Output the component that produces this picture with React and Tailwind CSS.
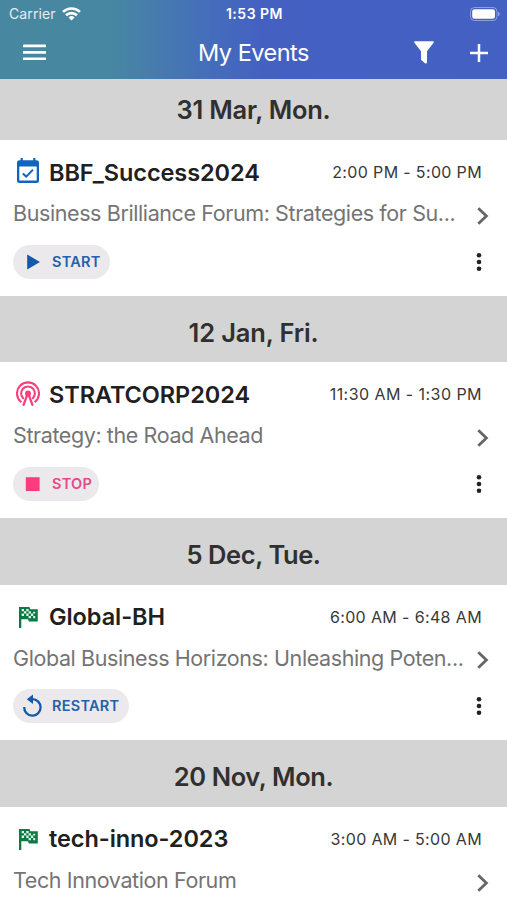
const ICON_BLUE = '#1259a8';

function WifiIcon() {
  return (
    <svg width="19" height="14" viewBox="0 0 19 14" fill="none" stroke="white" strokeWidth="2.6">
      <path d="M1 4.9 A12.2 12.2 0 0 1 18 4.9" />
      <path d="M4 8.3 A8 8 0 0 1 15 8.3" />
      <path d="M6.5 10.4 A4.4 4.4 0 0 1 12.5 10.4 L9.5 13.5 Z" fill="white" stroke="none" />
    </svg>
  );
}

function BatteryIcon() {
  return (
    <svg width="30" height="14" viewBox="0 0 30 14">
      <rect x="0.5" y="0.5" width="26.5" height="13" rx="4" fill="none" stroke="white" strokeOpacity="0.4" />
      <rect x="2.2" y="2.2" width="22.8" height="9.6" rx="2.4" fill="white" />
      <path d="M28.2 4.8 Q29.7 5.8 29.7 7 Q29.7 8.2 28.2 9.2 Z" fill="white" fillOpacity="0.5" />
    </svg>
  );
}

function CalendarIcon() {
  return (
    <svg className="mb-[3px]" width="24" height="26" viewBox="0 0 24 26" fill="none">
      <path d="M4.6 0 H6.8 V2.2 H17.2 V0 H19.4 V2.2 H20.5 Q23 2.2 23 4.7 V22.4 Q23 24.9 20.5 24.9 H3.5 Q1 24.9 1 22.4 V4.7 Q1 2.2 3.5 2.2 H4.6 Z M3.3 8.6 V22.4 H20.7 V8.6 Z" fill="#1165bd" fillRule="evenodd" />
      <path d="M6.8 15.4 L10.2 18.6 L17 11.6" stroke="#1165bd" strokeWidth="2" />
    </svg>
  );
}

function BroadcastIcon() {
  return (
    <svg className="mb-[3px]" width="24" height="26" viewBox="0 0 24 26" fill="none" stroke="#f9407f" strokeWidth="2.1" strokeLinecap="round">
      <path d="M4.7 21.6 A11 11 0 1 1 19.3 21.6" />
      <path d="M7.1 18.2 A6.9 6.9 0 1 1 16.9 18.2" />
      <circle cx="12" cy="13.4" r="3" fill="#f9407f" stroke="none" />
      <path d="M7.6 24.8 L11.4 14.4 H12.6 L16.4 24.8" strokeWidth="2.3" />
    </svg>
  );
}

function FlagIcon() {
  return (
    <svg width="24" height="26" viewBox="0 0 24 26">
      <path d="M3 3 H13.5 L14.3 5.3 H21.8 V17.4 H12.8 L12 15.2 H5.3 V24 H3 Z" fill="#0b7a45" />
      <path
        d="M5.7 5 h2.3 v2.3 h-2.3z M10.3 5 h2.3 v2.3 h-2.3z M8 7.3 h2.3 v2.3 h-2.3z M12.6 7.3 h2.3 v2.3 h-2.3z M5.7 9.6 h2.3 v2.3 h-2.3z M10.3 9.6 h2.3 v2.3 h-2.3z M14.9 9.6 h2.3 v2.3 h-2.3z M12.6 11.9 h2.3 v2.3 h-2.3z M17.2 11.9 h2 v2.3 h-2z M17.2 7.8 h2 v1.8 h-2z"
        fill="#e4f4eb"
      />
    </svg>
  );
}

function PlayIcon() {
  return (
    <svg width="20" height="22" viewBox="0 0 20 22">
      <path d="M5.2 3.4 L18 11 L5.2 18.6 Z" fill={ICON_BLUE} />
    </svg>
  );
}

function StopIcon() {
  return (
    <svg width="20" height="22" viewBox="0 0 20 22">
      <rect x="3.8" y="4.2" width="13.8" height="13.8" fill="#ff3b80" />
    </svg>
  );
}

function RestartIcon() {
  return (
    <svg width="20" height="22" viewBox="0 0 20 22" fill="none" className="overflow-visible">
      <path d="M2.2 12 A8.2 8.2 0 1 0 10.4 4.2" stroke={ICON_BLUE} strokeWidth="2.3" />
      <path d="M11 -0.6 V9 L4.8 4.2 Z" fill={ICON_BLUE} />
    </svg>
  );
}

const EVENTS = [
  {
    date: '31 Mar, Mon.',
    dateStyle: 'h-[61px] pt-px tracking-[-0.25px]',
    icon: <CalendarIcon />,
    code: 'BBF_Success2024',
    time: '2:00 PM - 5:00 PM',
    timeStyle: 'tracking-[0.35px]',
    title: 'Business Brilliance Forum: Strategies for Su...',
    action: 'START',
    actionIcon: <PlayIcon />,
    actionStyle: 'w-[97px] text-[#2560a8]',
  },
  {
    date: '12 Jan, Fri.',
    dateStyle: 'h-[66.8px] pt-[8px] tracking-[-0.15px]',
    icon: <BroadcastIcon />,
    code: 'STRATCORP2024',
    time: '11:30 AM - 1:30 PM',
    timeStyle: 'tracking-[0.45px]',
    title: 'Strategy: the Road Ahead',
    action: 'STOP',
    actionIcon: <StopIcon />,
    actionStyle: 'w-[86px] text-[#e8488a]',
  },
  {
    date: '5 Dec, Tue.',
    dateStyle: 'h-[66.8px] pt-[7px] tracking-[-0.4px]',
    icon: <FlagIcon />,
    code: 'Global-BH',
    time: '6:00 AM - 6:48 AM',
    timeStyle: 'tracking-[0.37px]',
    title: 'Global Business Horizons: Unleashing Poten...',
    action: 'RESTART',
    actionIcon: <RestartIcon />,
    actionStyle: 'w-[116px] text-[#2560a8]',
  },
  {
    date: '20 Nov, Mon.',
    dateStyle: 'h-[66.8px] pt-[8px] tracking-[-0.4px]',
    icon: <FlagIcon />,
    code: 'tech-inno-2023',
    time: '3:00 AM - 5:00 AM',
    timeStyle: 'tracking-[0.35px]',
    title: 'Tech Innovation Forum',
  },
];

function Header() {
  return (
    <header className="h-[79px] shrink-0 bg-[linear-gradient(90deg,#4788a0_0px,#4787a1_110px,#477dac_150px,#456ebb_205px,#4461c2_262px,#4360c3_507px)] text-white">
      <div className="grid h-[27px] grid-cols-3 items-center pr-[7px] pl-[9px]">
        <div className="flex items-center gap-[6px]">
          <span className="text-[14px] leading-5 tracking-[0.1px] text-white/85">Carrier</span>
          <WifiIcon />
        </div>
        <span className="text-center text-[14px] leading-5 font-semibold tracking-[0.5px] whitespace-nowrap">1:53 PM</span>
        <div className="flex justify-end">
          <BatteryIcon />
        </div>
      </div>
      <div className="grid h-[51px] grid-cols-[1fr_auto_1fr] items-center pr-[19px] pl-[23px]">
        <svg width="23" height="17" viewBox="0 0 23 17" fill="white">
          <rect y="0.6" width="23" height="2.7" rx="0.5" />
          <rect y="7" width="23" height="2.7" rx="0.5" />
          <rect y="13.4" width="23" height="2.7" rx="0.5" />
        </svg>
        <h1 className="-ml-[4px] text-[23.5px] leading-8 font-normal tracking-[-0.5px]">My Events</h1>
        <div className="flex items-center justify-end gap-[36px]">
          <svg width="20" height="23" viewBox="0 0 20 23" fill="white">
            <path d="M0.8 0.2 H19.2 Q20.2 0.7 19.6 1.7 L13 10.2 V21.6 Q12.6 23 11.3 22.4 L7.5 19.3 Q7 18.8 7 18.2 V10.2 L0.4 1.7 Q-0.2 0.7 0.8 0.2 Z" />
          </svg>
          <svg width="18" height="18" viewBox="0 0 18 18" stroke="white" strokeWidth="2.5">
            <path d="M9 0 V18 M0 9 H18" />
          </svg>
        </div>
      </div>
    </header>
  );
}

function EventCard({ event }) {
  return (
    <section className="shrink-0">
      <h2 className={`flex items-center justify-center bg-[#d4d4d4] text-[25.5px] leading-8 font-semibold text-[#303030] ${event.dateStyle}`}>
        {event.date}
      </h2>
      <article className="h-[155.5px] bg-white pt-[16.6px]">
        <div className="flex h-8 items-center pr-[25px] pl-4">
          <div className="flex w-[33px] shrink-0">{event.icon}</div>
          <span className="text-[23.5px] leading-8 font-semibold tracking-[-0.07px] text-[#202020]">{event.code}</span>
          <span className={`mb-px ml-auto text-[16px] leading-6 text-[#383838] ${event.timeStyle}`}>{event.time}</span>
        </div>
        <div className="mt-[8.6px] flex h-8 items-center justify-between pr-[18px] pl-[13px]">
          <span className="text-[21.5px] leading-8 tracking-[-0.4px] whitespace-nowrap text-[#747474]">{event.title}</span>
          <svg className="mt-[5px] shrink-0" width="12" height="18" viewBox="0 0 12 18" fill="none" stroke="#666" strokeWidth="2.8">
            <path d="M1.3 1.2 L9.4 9 L1.3 16.8" />
          </svg>
        </div>
        {event.action && (
          <div className="mt-[15.7px] flex items-center justify-between pr-[25px] pl-[13px]">
            <button className={`flex h-[34px] items-center gap-[10px] rounded-full bg-[#ebe9eb] pl-[9px] text-[14.5px] leading-5 font-semibold tracking-[0.25px] ${event.actionStyle}`}>
              {event.actionIcon}
              {event.action}
            </button>
            <svg width="6" height="20" viewBox="0 0 6 20" fill="#222">
              <circle cx="3" cy="3.3" r="2.3" />
              <circle cx="3" cy="10" r="2.3" />
              <circle cx="3" cy="16.7" r="2.3" />
            </svg>
          </div>
        )}
      </article>
    </section>
  );
}

export default function App() {
  return (
    <main className="flex h-[900px] w-[507px] flex-col overflow-hidden bg-white font-['Inter','Liberation_Sans',sans-serif]">
      <Header />
      {EVENTS.map((event) => (
        <EventCard key={event.code} event={event} />
      ))}
    </main>
  );
}
